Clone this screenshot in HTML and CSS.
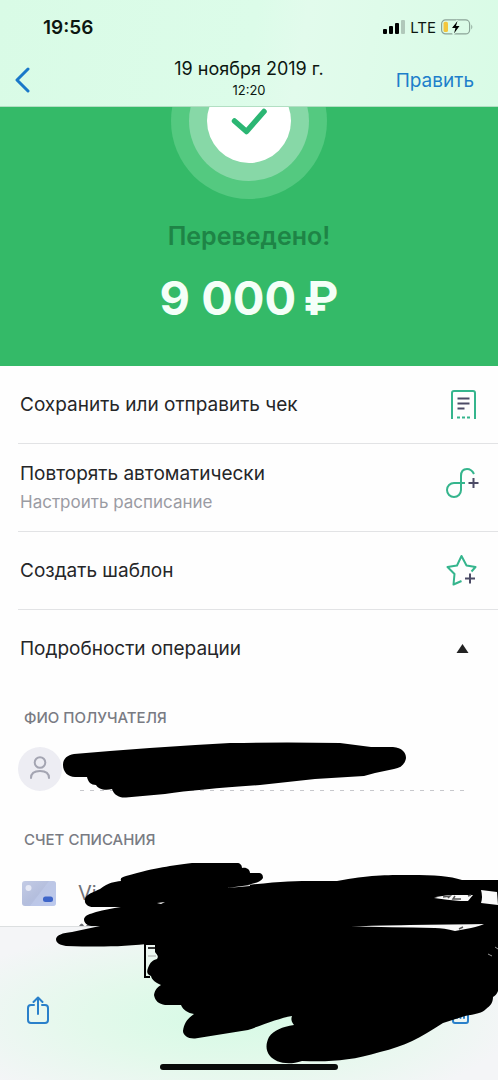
FILE: index.html
```html
<!DOCTYPE html>
<html lang="ru">
<head>
<meta charset="utf-8">
<meta name="viewport" content="width=device-width, initial-scale=1">
<title>Переведено</title>
<link rel="stylesheet" href="styles.css">
</head>
<body>
<div class="screen">
  <header class="top">
    <div class="status">
      <span class="clock">19:56</span>
      <div class="signals">
        <svg width="22" height="14" viewBox="0 0 22 14" aria-hidden="true">
          <rect x="0" y="9" width="4" height="5" rx="1"/><rect x="6" y="6" width="4" height="8" rx="1"/><rect x="12" y="3" width="4" height="11" rx="1"/><rect x="18" y="0" width="4" height="14" rx="1" opacity=".2"/>
        </svg>
        <span class="network">LTE</span>
        <svg width="32" height="16" viewBox="0 0 32 16" aria-hidden="true">
          <rect x=".6" y=".9" width="28" height="14" rx="4" fill="none" stroke="#8ba397" stroke-width="1.2"/>
          <rect x="2.5" y="2.8" width="4.5" height="10.2" rx="1.6" fill="#f3c63c"/>
          <path d="M30.3 5.5q2 2.4 0 5z" fill="#8ba397"/>
          <path d="M16.5 1.5 10 9h4l-2 6.5L19 7h-4z" stroke="#dcfbe8" stroke-width="2"/>
          <path d="M16.5 2 11 9h3.500l-1.500 5.500L18.500 7H15z"/>
        </svg>
      </div>
    </div>
    <nav class="nav">
      <button class="back" aria-label="Назад"><svg width="16" height="26" viewBox="0 0 16 26" aria-hidden="true"><path d="M14 2 3 13l11 11"/></svg></button>
      <div class="heading"><h1>19 ноября 2019 г.</h1><time>12:20</time></div>
      <button class="edit">Править</button>
    </nav>
  </header>
  <main class="content">
    <section class="hero">
      <svg class="seal" width="156" height="92" viewBox="0 0 156 92" aria-hidden="true">
        <circle cx="78" cy="14" r="78" fill="#54c980"/><circle cx="78" cy="14" r="60" fill="#87d8a7"/><circle cx="78" cy="14" r="42" fill="#fff"/>
        <path d="M63.500 14 75.500 24.500 93 4.500" fill="none" stroke="#2bb673" stroke-width="5.500" stroke-linecap="round" stroke-linejoin="round"/>
      </svg>
      <p class="state">Переведено!</p>
      <p class="amount">9 000&thinsp;₽</p>
    </section>
    <button class="row"><span class="label">Сохранить или отправить чек</span>
      <svg class="icon" width="34" height="34" viewBox="0 0 34 34" aria-hidden="true"><path class="line" d="M6 31V5q0-2 2-2h19q2 0 2 2v26"/><path class="dots" d="M11 29.500h3M16 29.500h3M21 29.500h3"/><path class="dark" d="M11.500 10.500h12M11.500 15.500h12M11.500 20.500h7"/></svg>
    </button>
    <button class="row tall"><span class="label">Повторять автоматически<small>Настроить расписание</small></span>
      <svg class="icon" width="34" height="34" viewBox="0 0 34 34" aria-hidden="true"><path class="line" d="M28 8C26 4 23.500 3 21 3c-4.500 0-6 3.500-6 7v14a7 7 0 1 1-7-7h11"/><path class="dark" d="M22.500 17h10M27.500 12v10"/></svg>
    </button>
    <button class="row"><span class="label">Создать шаблон</span>
      <svg class="icon" width="34" height="34" viewBox="0 0 34 34" aria-hidden="true"><path class="line" d="m15.500 27-8 3.500 1-10.500L1.500 13l9.500-1.500L15.500 2l5 9.500L29.500 13 25.500 17.500"/><path class="dark" d="M19 24.500h10M24 19.500v10"/></svg>
    </button>
    <button class="row open" aria-expanded="true"><span class="label">Подробности операции</span>
      <svg class="arrow" width="34" height="10" viewBox="0 0 34 10" aria-hidden="true"><path d="M16.500 0 22.500 9h-12z" fill="#222"/></svg>
    </button>
    <section class="details">
      <h2>ФИО ПОЛУЧАТЕЛЯ</h2>
      <div class="person">
        <span class="avatar"><svg width="44" height="44" viewBox="0 0 44 44" aria-hidden="true"><circle cx="22" cy="15.500" r="5.300"/><path d="M13 31c0-5 3-7 9-7s9 2 9 7"/></svg></span>
        <svg class="rule" height="44" aria-hidden="true"><line x1="0" y1="43.500" x2="100%" y2="43.500"/></svg>
      </div>
      <h2>СЧЕТ СПИСАНИЯ</h2>
      <div class="account">
        <svg width="34" height="25" viewBox="0 0 34 25" aria-hidden="true">
          <defs><linearGradient id="card" x1="0" y1="0" x2="1" y2="1"><stop offset="0" stop-color="#c3cbe5"/><stop offset=".5" stop-color="#b4bedd"/><stop offset="1" stop-color="#b5c4ed"/></linearGradient></defs>
          <rect width="34" height="25" rx="3" fill="url(#card)"/><path d="M8 25 27 0h4q3 0 3 3v19q0 3-3 3z" fill="#c6d1ef" opacity=".45"/><circle cx="6.500" cy="7" r="3" fill="#e5e8f5"/><rect x="21" y="15.500" width="10" height="5.500" rx="2.500" fill="#3e65c9"/>
        </svg>
        <p>Vi</p>
      </div>
    </section>
  </main>
  <footer class="toolbar">
    <button aria-label="Поделиться"><svg width="22" height="28" viewBox="0 0 22 28" aria-hidden="true"><path d="M7 9H4Q1 9 1 12v12q0 3 3 3h14q3 0 3-3V12q0-3-3-3h-3M11 18V2M6.500 6 11 1.500 15.500 6"/></svg></button>
    <button aria-label="Удалить"><svg width="22" height="28" viewBox="0 0 22 28" aria-hidden="true"><path d="M4 5v20q0 2 2 2h11q2 0 2-2V5M2 5h19M8 9v13M11.500 9v13M15 9v13"/></svg></button>
  </footer>
  <svg class="marker" width="498" height="1080" viewBox="0 0 498 1080" aria-hidden="true">
    <path d="M79 926q3-5 5 0zM86 926q3-5 5 0z" fill="#6f7177"/>
    <path d="M145 944v33h5M145 944h10" fill="none" stroke="#000" stroke-width="2"/>
    <path d="M148 948h8" stroke="#333" stroke-width="2"/><path d="M148 956h8" stroke="#aaa"/>
    <path d="M74 754Q155 747 230 743Q290 742 340 743L371 747H393C402 748 406 752 406 758C405 764 401 768 394 769L375 773L364 776L315 779L260 785Q200 789 165 794L126 797.500C119 798 114 795 112 789C105 791 98 789 96 785C91 785 88 782 87 777H75C68 777 63 772 63 765C63 759 67 755 74 754z"/>
    <path d="M85 899C86 894 94 892 100 889C109 882 114 882 121 881C120 878 122 877 126 876C158 867 170 866 192 863H237C240 863 242 865 242 868C247 867 250 870 250 873H258C262 873 263 875 263 878C261 882 255 883 248 885C290 880 310 881 337 881C369 875 385 875 410 875C435 875 450 876 462 880H498V991C497 994 495 996 493 997C493 1003 490 1006 486 1009C483 1013 475 1014 465 1016L443 1023C420 1038 405 1046 380 1052C350 1061 330 1062 302 1061C287 1066 275 1062 270 1056C265 1050 266 1043 269 1037C274 1030 282 1027 294 1025C291 1021 291 1019 292 1016C280 1018 265 1024 248 1030L195 1038.500C188 1039 183 1035 183 1031C184 1023 188 1018 194 1014C188 1013 183 1010 181 1005H165C159 1004 155 1001 154 995C155 989 158 987 161 985C155 982 152 980 151 976C146 974 147 971 148 968C150 962 153 960 157 959C159 956 157 955 155 952V943C122 947 100 947 66 946C60 945 56 943 56 939C57 935 62 933 72 932L100 926H91C87 925 84 923 84 919C85 915 90 914 96 912C112 908 130 905 145 904L145 907H93C88 907 84 904 85 899z"/>
    <path d="m118 907 27-3v3z" fill="#000"/>
    <g fill="#fafafa">
      <path d="M481 890 497 892 498 905 481 903Q483 897 481 890z"/>
      <path d="M434 898Q440 896 449 895H473L468 901H460Q447 900 434 898z"/>
      <path d="M351 926.500Q385 925 484 924Q480 926 471 928L455 931Q444 928 435 928Q390 927 351 926.500z"/>
      <path d="m227 888 23-3v1zM157 903l8-1-4 2z"/>
    </g>
    <path d="m443 897 7-1-2 2M455 896l-2 3h8M468 896l3-1M459 929l4-2" fill="none" stroke="#555" stroke-width="1.500"/>
    <path d="m488 954 4 2M495 947l3 2" stroke="#999"/>
  </svg>
  <div class="home"></div>
</div>
</body>
</html>
```
FILE: styles.css
```css
* { box-sizing: border-box; }
body { margin: 0; background: #fefefe; color: #252628; font-family: Inter, "Noto Sans", sans-serif; }
h1, h2, p { margin: 0; font-weight: 400; }
button { border: 0; padding: 0; background: none; color: inherit; font: inherit; cursor: pointer; }
svg { display: block; flex: none; }
.screen { position: relative; display: flex; flex-direction: column; height: 100vh; overflow: hidden; }

.top { flex: none; background: linear-gradient(100deg, #d9fbe6, #dcfce9 50%, #e2fbec 60%, #d9fbe6); color: #0d1711; border-bottom: 1px solid #b2dfc3; }
.status { display: flex; align-items: center; justify-content: space-between; height: 54px; padding: 0 25px 0 43px; }
.clock { font-size: 19px; font-weight: 600; }
.signals { display: flex; align-items: center; gap: 5px; }
.network { font-size: 15px; }
.nav { display: grid; grid-template-columns: minmax(0, 1fr) auto minmax(0, 1fr); align-items: center; height: 52px; padding: 0 24px 0 14px; }
.back { justify-self: start; }
.back path { fill: none; stroke: #1a78c9; stroke-width: 3; stroke-linecap: round; stroke-linejoin: round; }
.heading { display: flex; flex-direction: column; align-items: center; padding: 0 0 4px 10px; }
.heading h1 { font-size: 18px; line-height: 24px; }
.heading time { font-size: 13px; line-height: 18px; }
.edit { justify-self: end; color: #1d7fcb; font-size: 19px; }

.content { flex: 1; min-height: 0; overflow: hidden; }
.hero { display: flex; flex-direction: column; align-items: center; padding-bottom: 40px; background: #34ba68; }
.state { margin-top: 21px; color: #1e8446; font-size: 25px; font-weight: 600; line-height: 32px; }
.amount { margin-top: 18px; color: #f4fff8; font-size: 47px; font-weight: 700; line-height: 56px; }

.row { display: flex; align-items: center; justify-content: space-between; width: calc(100% - 18px); height: 78px; margin-left: 18px; padding: 0 18px 0 2px; border-bottom: 1px solid #e2e3e5; text-align: left; }
.row.tall { height: 88px; }
.row.tall .icon { align-self: flex-start; margin-top: 22px; }
.row.open { border-bottom: 0; }
.label { font-size: 19px; font-weight: 400; line-height: 24px; }
.label small { display: block; margin-top: 4px; color: #9a9ba3; font-size: 17px; line-height: 24px; }
.icon path { fill: none; stroke-width: 2; stroke-linejoin: round; }
.icon .line, .icon .dots { stroke: #35b58d; }
.icon .dark { stroke: #4c4b66; }

.details { padding: 21px 29px 0 18px; }
.details h2 { padding-left: 6px; color: #797b83; font-size: 15px; font-weight: 500; line-height: 18px; }
.person { display: flex; gap: 18px; margin: 20px 0 40px; }
.avatar { border-radius: 50%; background: #ededf3; }
.avatar path, .avatar circle { fill: none; stroke: #a4a5b2; stroke-width: 2; stroke-linecap: round; }
.rule { flex: 1; min-width: 0; }
.rule line { stroke: #c7c8cc; stroke-dasharray: 4 6; }
.account { display: flex; align-items: flex-start; gap: 22px; margin-top: 32px; padding-left: 4px; }
.account p { color: #6f7177; font-size: 20px; line-height: 24px; }

.toolbar { flex: none; display: flex; align-items: flex-start; justify-content: space-between; height: 154px; padding: 69px 27px 0; border-top: 1px solid #dcdfe0; background: radial-gradient(ellipse at 45% 60%, #d6fae5, #e3f9eb 35%, #f4f5f7 75%); }
.toolbar path { fill: none; stroke: #2a80ca; stroke-width: 2; stroke-linecap: round; stroke-linejoin: round; }
.marker { position: absolute; top: 0; left: 0; pointer-events: none; }
.home { position: absolute; bottom: 10px; left: 50%; width: 178px; height: 6px; margin-left: -89px; border-radius: 3px; background: #080a09; }
```
